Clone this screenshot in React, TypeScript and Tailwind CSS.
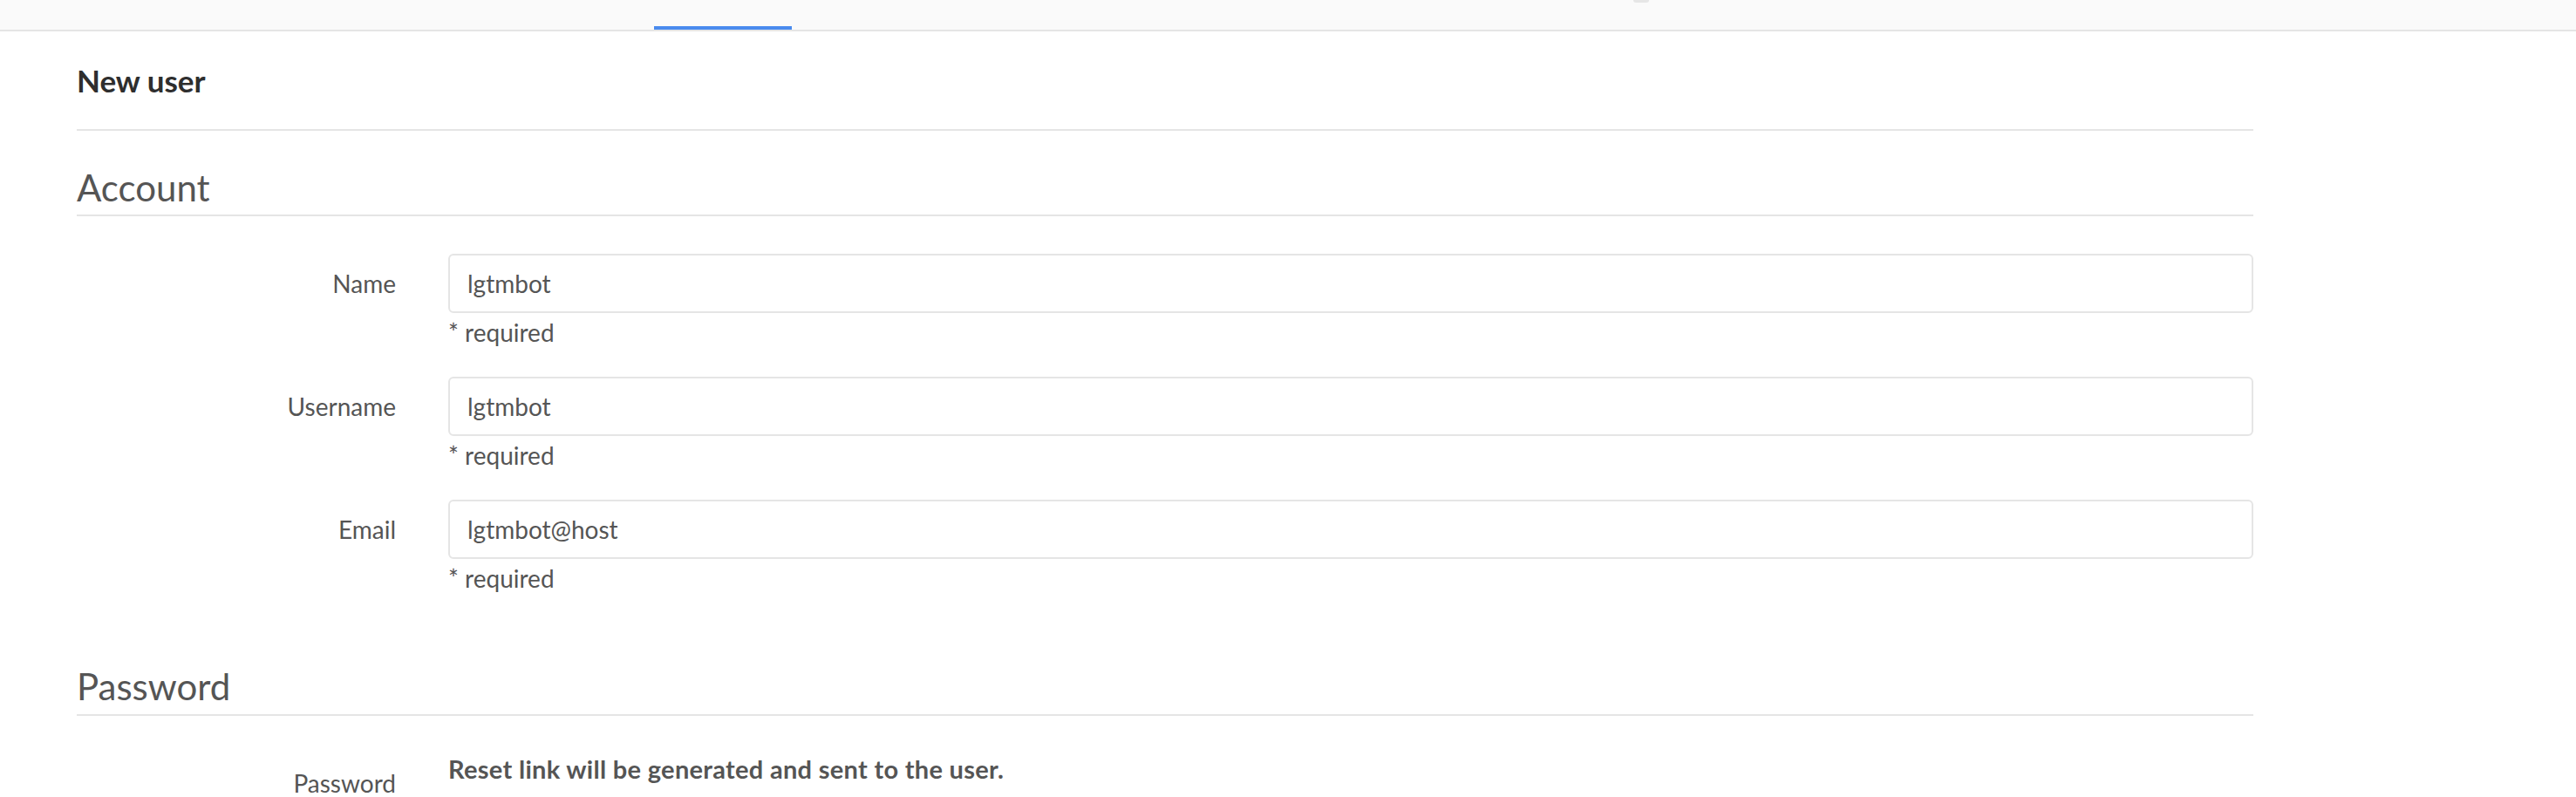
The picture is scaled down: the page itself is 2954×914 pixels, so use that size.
import React from "react";

const font = { fontFamily: "Lato, 'Open Sans', sans-serif" };

function Field({ label, value, first }: { label: string; value: string; first?: boolean }) {
  return (
    <div className={`grid grid-cols-[366px_1fr] gap-x-[60px] ${first ? "mt-[43px]" : "mt-[31px]"}`}>
      <label className="h-[68px] flex items-center justify-end text-[28px] text-[#555]">{label}</label>
      <div>
        <input
          readOnly
          value={value}
          className="w-full h-[68px] px-[20px] border-2 border-[#e5e5e5] rounded-[6px] bg-white text-[28px] text-[#555] outline-none"
          style={font}
        />
        <p className="mt-[2px] text-[28px] leading-[40px] text-[#555]">* required</p>
      </div>
    </div>
  );
}

export default function App() {
  return (
    <div className="min-h-screen w-full bg-white" style={font}>
      <div className="h-[36px] bg-[#fafafa] border-b-2 border-[#e5e5e5] flex pl-[750px]">
        <div className="w-[158px] h-full border-b-4 border-[#4a8bee]"></div>
        <div className="ml-[965px] w-[18px] h-[3px] rounded-b-full bg-[#e6e6e6]"></div>
      </div>

      <div className="ml-[88px] w-[2496px]">
        <div className="h-[114px] flex items-center border-b-2 border-[#e5e5e5]">
          <h3 className="text-[35px] font-bold text-[#2e2e2e]">New user</h3>
        </div>

        <h4 className="mt-[35px] leading-[60px] pb-[1px] text-[42px] text-[#555] border-b-2 border-[#e5e5e5]">
          Account
        </h4>

        <Field label="Name" value="lgtmbot" first />
        <Field label="Username" value="lgtmbot" />
        <Field label="Email" value="lgtmbot@host" />

        <h4 className="mt-[74px] leading-[60px] pb-[2px] text-[42px] text-[#555] border-b-2 border-[#e5e5e5]">
          Password
        </h4>

        <div className="grid grid-cols-[366px_1fr] gap-x-[60px] mt-[41px]">
          <label className="pt-[16px] text-right text-[28px] leading-[40px] text-[#555]">Password</label>
          <p className="text-[29px] leading-[40px] font-bold tracking-[0.3px] text-[#555]">
            Reset link will be generated and sent to the user.
          </p>
        </div>
      </div>
    </div>
  );
}
